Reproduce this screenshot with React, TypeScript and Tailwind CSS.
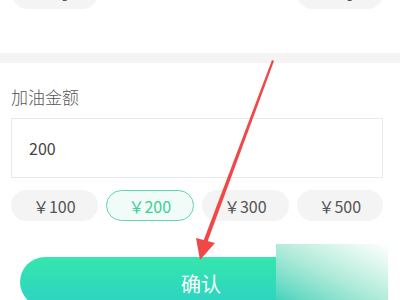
const AMOUNTS = [
  { label: '￥100', active: false },
  { label: '￥200', active: true },
  { label: '￥300', active: false },
  { label: '￥500', active: false },
]

export default function App() {
  return (
    <div
      className="relative w-[400px] h-[300px] overflow-hidden bg-white"
      style={{ fontFamily: '"Noto Sans CJK SC", "Noto Sans", sans-serif' }}
    >
      {/* previous section, scrolled off */}
      <div className="flex justify-between pl-[12px] pr-[17px] -mt-[22px]">
        <div className="w-[86px] h-[31px] rounded-full bg-[#f4f4f4] flex items-center justify-center text-[15px] text-[#555]">
          92号
        </div>
        <div className="w-[86px] h-[31px] rounded-full bg-[#f4f4f4] flex items-center justify-center text-[15px] text-[#555]">
          95号
        </div>
      </div>

      <div className="mt-[44px] h-[10px] bg-[#f4f4f4]" />

      <div className="pl-[11px] pr-[17px]">
        <p className="mt-[22px] text-[17px] leading-[24px] font-light text-[#555]">加油金额</p>

        <div className="mt-[9px] h-[60px] border border-[#e9e9e9] flex items-center pl-[17px] text-[16px] text-[#444]">
          200
        </div>

        <div className="mt-[12px] flex gap-[8px]">
          {AMOUNTS.map((a) => (
            <div
              key={a.label}
              className={
                a.active
                  ? 'flex-1 h-[31px] rounded-full border border-[#62d6aa] bg-[#f1fbf7] flex items-center justify-center text-[16px] text-[#3fcf98]'
                  : 'flex-1 h-[31px] rounded-full bg-[#f4f4f4] flex items-center justify-center text-[16px] text-[#555]'
              }
            >
              {a.label}
            </div>
          ))}
        </div>
      </div>

      <div className="mt-[36px] ml-[20px] mr-[18px] h-[50px] rounded-full bg-gradient-to-b from-[#35e6ad] to-[#2dd2c3] flex justify-center pt-[12px] text-[20px] text-white">
        确认
      </div>

      {/* faded overlay at bottom right */}
      <div className="absolute left-[276px] top-[244px] w-[112px] h-[56px] bg-gradient-to-bl from-white via-[#b4ecdb] to-[#3ed4bd]" />

      {/* red arrow annotation */}
      <svg className="absolute inset-0 pointer-events-none" width="400" height="300" viewBox="0 0 400 300">
        <polygon points="272,60 274,61 207,243 203,242" fill="#f04747" />
        <polygon points="196,238 215,243 200,260" fill="#f04747" />
      </svg>
    </div>
  )
}
